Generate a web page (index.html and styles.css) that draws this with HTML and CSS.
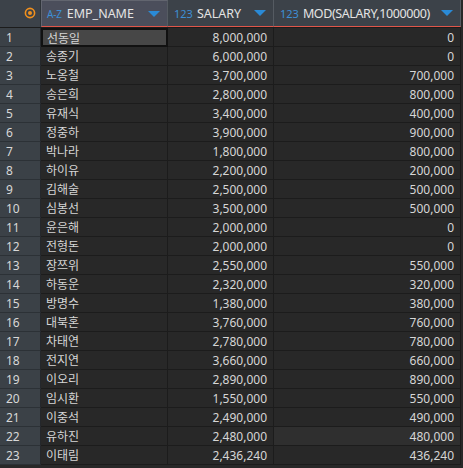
FILE: index.html
```html
<!DOCTYPE html>
<html>
<head>
<meta charset="utf-8">
<link rel="stylesheet" href="styles.css">
</head>
<body>
<div class="grid">
  <div class="head">
    <div class="cell c0 corner">
      <svg width="12" height="12" viewBox="0 0 12 12"><circle cx="6" cy="6" r="4.6" fill="none" stroke="#f0901e" stroke-width="1.6"/><circle cx="6" cy="6" r="2" fill="#f0901e"/></svg>
    </div>
    <div class="cell c1 hcell active"><span class="tag az">A-Z</span><span class="htext">EMP_NAME</span><span class="tri"></span></div>
    <div class="cell c2 hcell"><span class="tag">123</span><span class="htext">SALARY</span><span class="tri"></span></div>
    <div class="cell c3 hcell"><span class="tag">123</span><span class="htext narrow">MOD(SALARY,1000000)</span><span class="tri"></span></div>
  </div>
  <div class="body" id="body"></div>
</div>
<script src="app.js"></script>
</body>
</html>
```
FILE: app.js
```js
const data = [
["선동일","8,000,000","0"],
["송종기","6,000,000","0"],
["노옹철","3,700,000","700,000"],
["송은희","2,800,000","800,000"],
["유재식","3,400,000","400,000"],
["정중하","3,900,000","900,000"],
["박나라","1,800,000","800,000"],
["하이유","2,200,000","200,000"],
["김해술","2,500,000","500,000"],
["심봉선","3,500,000","500,000"],
["윤은해","2,000,000","0"],
["전형돈","2,000,000","0"],
["장쯔위","2,550,000","550,000"],
["하동운","2,320,000","320,000"],
["방명수","1,380,000","380,000"],
["대북혼","3,760,000","760,000"],
["차태연","2,780,000","780,000"],
["전지연","3,660,000","660,000"],
["이오리","2,890,000","890,000"],
["임시환","1,550,000","550,000"],
["이중석","2,490,000","490,000"],
["유하진","2,480,000","480,000"],
["이태림","2,436,240","436,240"]
];
const body = document.getElementById('body');
data.forEach((r, i) => {
  const row = document.createElement('div');
  row.className = 'row';
  row.innerHTML =
    '<div class="cell c0 num">' + (i + 1) + '</div>' +
    '<div class="cell c1 txt' + (i === 0 ? ' sel' : '') + '">' + r[0] + '</div>' +
    '<div class="cell c2 rt">' + r[1] + '</div>' +
    '<div class="cell c3 rt' + (i === 21 ? ' hov' : '') + '">' + r[2] + '</div>';
  body.appendChild(row);
});
```
FILE: styles.css
```css
html, body {
  margin: 0;
  padding: 0;
  background: #282828;
}
body {
  width: 463px;
  height: 468px;
  overflow: hidden;
  font-family: "Noto Sans", "Noto Sans CJK KR", sans-serif;
  font-size: 12px;
  color: #d6d6d6;
}
.grid {
  width: 461px;
}
.head {
  display: flex;
  height: 27px;
  background: #3c4249;
}
.cell {
  box-sizing: border-box;
  display: flex;
  align-items: center;
  flex: none;
}
.c0 { width: 41px; }
.c1 { width: 127px; }
.c2 { width: 106px; }
.c3 { width: 187px; }
.head .cell {
  height: 27px;
  border-right: 1px solid #555b62;
  border-bottom: 1px solid #e0564a;
}
.head .corner {
  justify-content: flex-end;
  padding-right: 4px;
  border-bottom-color: #3c4249;
  border-right-color: #2e3338;
}
.hcell {
  padding-left: 6px;
  padding-right: 7px;
  color: #e4e4e4;
  font-size: 12.5px;
}
.hcell.active {
  background: #4b4e5b;
  border-left: 1px solid #62656f;
  border-top: 1px solid #62656f;
  padding-left: 5px;
}
.tag {
  color: #3d8fd6;
  font-size: 11px;
  margin-right: 4px;
}
.tag.az {
  font-size: 10px;
  letter-spacing: -0.2px;
  margin-right: 5px;
}
.htext {
  flex: 1;
  white-space: nowrap;
}
.htext.narrow {
  letter-spacing: -0.4px;
}
.tri {
  width: 0;
  height: 0;
  border-left: 6px solid transparent;
  border-right: 6px solid transparent;
  border-top: 6px solid #2a8ad6;
}
.body {
  border-top: 1px solid #1c1c1c;
}
.row {
  display: flex;
  height: 19px;
}
.row .cell {
  height: 19px;
  border-right: 1px solid #1c1c1c;
  border-bottom: 1px solid #1c1c1c;
  background: #282828;
  white-space: nowrap;
}
.row .num {
  background: #3b4147;
  border-right: 1px solid #24272b;
  border-bottom: 1px solid #2c3136;
  padding-left: 6px;
  color: #d8d8d8;
}
.row .txt {
  padding-left: 5px;
}
.row .rt {
  justify-content: flex-end;
  padding-right: 6px;
}
.row .sel {
  background: #474747;
  border: 2px solid #111111;
  padding-left: 4px;
}
.row .hov {
  background: #2f2f2f;
}
```
